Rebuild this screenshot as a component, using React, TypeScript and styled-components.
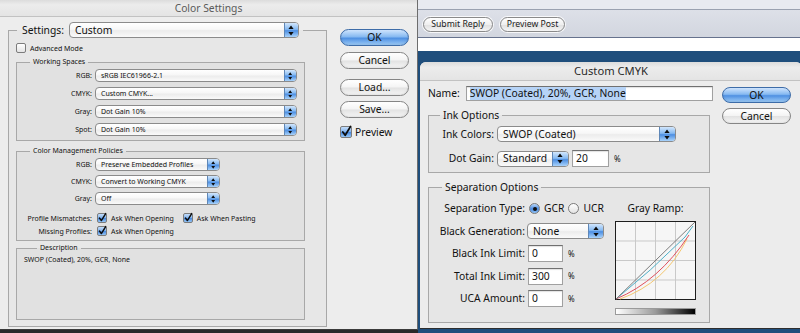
import React from "react"
import styled, { createGlobalStyle, css } from "styled-components"

const FONT = `"Noto Sans", "DejaVu Sans", sans-serif`
const BIG = 10.3
const SMALL = 7
const CMYK_SIZE = 10.3

const GlobalStyle = createGlobalStyle`
  * { box-sizing: border-box; }
  html, body { margin: 0; padding: 0; }
  body {
    width: 800px;
    height: 333px;
    overflow: hidden;
    background: #2a2a2a;
    font-family: ${FONT};
    color: #111;
  }
`

const Screen = styled.div`
  display: flex;
  width: 800px;
  height: 333px;
  overflow: hidden;
`

/* ---------- windows ---------- */

const ColorSettingsWindow = styled.section`
  flex: none;
  width: 418px;
  height: 330px;
  display: flex;
  flex-direction: column;
  background: #ededed;
  border-right: 1px solid #6d6d6d;
  border-bottom: 1px solid #3b3b3b;
`

const WindowTitle = styled.div<{ $h: number; $size: number; $color: string }>`
  flex: none;
  height: ${(p) => p.$h}px;
  display: flex;
  align-items: center;
  justify-content: center;
  font-size: ${(p) => p.$size}px;
  line-height: 1;
  color: ${(p) => p.$color};
  background: linear-gradient(#dcdcdc 0%, #ececec 30%, #e4e4e4 100%);
  border-bottom: 1px solid #c2c2c2;
`

const WindowBody = styled.div<{ $padLeft: number }>`
  display: flex;
  align-items: flex-start;
  padding-left: ${(p) => p.$padLeft}px;
`

const MainColumn = styled.div<{ $w: number }>`
  flex: none;
  width: ${(p) => p.$w}px;
  display: flex;
  flex-direction: column;
`

const ButtonColumn = styled.div<{ $ml: number; $mt: number }>`
  flex: none;
  margin: ${(p) => p.$mt}px 0 0 ${(p) => p.$ml}px;
  display: flex;
  flex-direction: column;
  align-items: flex-start;
`

/* ---------- group boxes ---------- */

const GroupBox = styled.fieldset<{ $mt: number; $pad: string; $w?: number; $h?: number; $gap?: number }>`
  margin: ${(p) => p.$mt}px 0 0 0;
  padding: ${(p) => p.$pad};
  min-width: 0;
  ${(p) => p.$w && `width: ${p.$w}px;`}
  ${(p) => p.$h && `height: ${p.$h}px;`}
  border: 1px solid #a8a8a8;
  background: rgba(0, 0, 0, 0.022);
  display: flex;
  flex-direction: column;
  gap: ${(p) => p.$gap || 0}px;
`

const GroupTitle = styled.legend<{ $ml: number; $size: number; $h: number }>`
  margin-left: ${(p) => p.$ml}px;
  padding: 0 3px;
  height: ${(p) => p.$h}px;
  font-size: ${(p) => p.$size}px;
  line-height: ${(p) => p.$h}px;
  white-space: nowrap;
`

const SettingsLegend = styled.legend`
  margin-left: 1px;
  padding: 0 4px 0 5px;
  height: 16px;
`

const LegendInner = styled.div`
  display: flex;
  align-items: center;
  gap: 5px;
  height: 16px;
`

/* ---------- rows & labels ---------- */

const FieldRow = styled.div<{ $h: number; $mt?: number; $gap?: number; $top?: boolean }>`
  display: flex;
  align-items: ${(p) => (p.$top ? "flex-start" : "center")};
  height: ${(p) => p.$h}px;
  margin-top: ${(p) => p.$mt || 0}px;
  gap: ${(p) => p.$gap || 0}px;
`

const FieldLabel = styled.span<{ $w?: number; $size: number; $mr: number }>`
  flex: none;
  ${(p) => p.$w && `width: ${p.$w}px;`}
  margin-right: ${(p) => p.$mr}px;
  text-align: right;
  font-size: ${(p) => p.$size}px;
  line-height: 1;
  white-space: nowrap;
`

const PlainText = styled.span<{ $size: number; $ml?: number }>`
  margin-left: ${(p) => p.$ml || 0}px;
  font-size: ${(p) => p.$size}px;
  line-height: 1;
  white-space: nowrap;
`

const CheckOption = styled.span<{ $ml?: number }>`
  display: inline-flex;
  align-items: center;
  gap: 4px;
  margin-left: ${(p) => p.$ml || 0}px;
`

/* ---------- aqua controls ---------- */

const Popup = styled.div<{ $w: number; $h: number }>`
  flex: none;
  display: flex;
  width: ${(p) => p.$w}px;
  height: ${(p) => p.$h}px;
  border: 1px solid #8b8b8b;
  border-radius: 4px;
  overflow: hidden;
  background: linear-gradient(#ffffff 0%, #f7f7f7 45%, #ececec 55%, #fafafa 100%);
`

const PopupValue = styled.span<{ $size: number; $indent: number }>`
  flex: 1;
  display: flex;
  align-items: center;
  padding-left: ${(p) => p.$indent}px;
  font-size: ${(p) => p.$size}px;
  line-height: 1;
  white-space: nowrap;
  overflow: hidden;
`

const PopupArrows = styled.span<{ $w: number }>`
  flex: none;
  width: ${(p) => p.$w}px;
  display: flex;
  align-items: center;
  justify-content: center;
  background: linear-gradient(#d2e6fc 0%, #86baf2 45%, #4c8ee2 55%, #a9d3fb 100%);
  border-left: 1px solid #5f87b7;
`

const PushButton = styled.button<{ $w: number; $h: number; $mt: number; $default?: boolean }>`
  flex: none;
  width: ${(p) => p.$w}px;
  height: ${(p) => p.$h}px;
  margin-top: ${(p) => p.$mt}px;
  padding: 0;
  border: 1px solid #858585;
  border-radius: 999px;
  background: linear-gradient(#ffffff 0%, #f4f4f4 48%, #e2e2e2 52%, #f6f6f6 100%);
  font-family: ${FONT};
  font-size: ${BIG}px;
  line-height: 1;
  color: #111;
  box-shadow: inset 0 -1px 2px rgba(0, 0, 0, 0.08);
  ${(p) =>
    p.$default &&
    css`
      border-color: #3d6ca8;
      background: linear-gradient(#cfe4fd 0%, #86b9f1 45%, #4f90e2 55%, #9ccbf8 100%);
    `}
`

const CheckBox = styled.span<{ $size: number; $checked?: boolean }>`
  flex: none;
  display: inline-flex;
  align-items: center;
  justify-content: center;
  width: ${(p) => p.$size}px;
  height: ${(p) => p.$size}px;
  border: 1px solid #7c7c7c;
  border-radius: 2px;
  background: ${(p) =>
    p.$checked
      ? "linear-gradient(#c4ddfa 0%, #7fb2ee 50%, #4a8ae0 55%, #95c6f6 100%)"
      : "linear-gradient(#ffffff, #e4e4e4)"};
`

const RadioButton = styled.span<{ $on?: boolean }>`
  flex: none;
  display: inline-flex;
  align-items: center;
  justify-content: center;
  width: 11px;
  height: 11px;
  border-radius: 50%;
  border: 1px solid #7a7a7a;
  background: ${(p) =>
    p.$on ? "linear-gradient(#b9d7fa, #4b8be0 55%, #8fc2f6)" : "linear-gradient(#ffffff, #e2e2e2)"};
  &::after {
    content: "";
    display: ${(p) => (p.$on ? "block" : "none")};
    width: 4px;
    height: 4px;
    border-radius: 50%;
    background: #101010;
  }
`

const TextField = styled.div<{ $w: number; $h: number; $size: number; $ml?: number }>`
  flex: none;
  display: flex;
  align-items: center;
  width: ${(p) => p.$w}px;
  height: ${(p) => p.$h}px;
  margin-left: ${(p) => p.$ml || 0}px;
  padding-left: 3px;
  background: #ffffff;
  border: 1px solid #a0a0a0;
  border-top-color: #707070;
  box-shadow: inset 0 1px 1px rgba(0, 0, 0, 0.12);
  font-size: ${(p) => p.$size}px;
  line-height: 1;
  white-space: nowrap;
`

const Selection = styled.span`
  background: #b6d3f6;
  padding: 1px 0;
`

/* ---------- forum page behind ---------- */

const RightPane = styled.div`
  flex: 1;
  display: flex;
  flex-direction: column;
  min-width: 0;
`

const ForumTopStrip = styled.div`
  flex: none;
  height: 10px;
  background: #e8eaf0;
  border-bottom: 1px solid #9aa1b0;
`

const ReplyBar = styled.div`
  flex: none;
  height: 28px;
  display: flex;
  align-items: center;
  gap: 7px;
  padding: 2px 0 0 5px;
  background: linear-gradient(#dde0e8, #d2d6df);
  border-bottom: 1px solid #66728d;
`

const ForumButton = styled.button<{ $w: number }>`
  width: ${(p) => p.$w}px;
  height: 15px;
  padding: 0;
  border: 1px solid #8a8a8a;
  border-radius: 8px;
  background: linear-gradient(#ffffff, #efefef 50%, #e0e0e0 52%, #f5f5f5);
  box-shadow: 0 0 0 1px rgba(255, 255, 255, 0.8);
  font-family: ${FONT};
  font-size: 8.7px;
  line-height: 1;
  color: #222;
`

const WhiteStrip = styled.div`
  flex: none;
  height: 13px;
  background: #ffffff;
`

const BlueArea = styled.div`
  flex: 1;
  padding: 11px 0 0 2px;
  background: #1f4e7c;
`

const CmykWindow = styled.section`
  width: 382px;
  height: 267px;
  display: flex;
  flex-direction: column;
  background: #ececec;
  border-radius: 6px 6px 0 0;
  border-bottom: 1px solid #2e2e2e;
  overflow: hidden;
`

/* ---------- gray ramp ---------- */

const RampColumn = styled.div`
  flex: none;
  width: 81px;
  margin-left: auto;
  display: flex;
  flex-direction: column;
  align-items: center;
`

const RampLabel = styled.div`
  height: 17px;
  display: flex;
  align-items: center;
  font-size: ${CMYK_SIZE}px;
  line-height: 1;
  white-space: nowrap;
`

const RampBar = styled.div`
  width: 81px;
  height: 7px;
  margin-top: 8px;
  border: 1px solid #9a9a9a;
  background: linear-gradient(to right, #ffffff, #9a9a9a 50%, #000000);
`

const SepForm = styled.div`
  display: flex;
  flex-direction: column;
  gap: 5.5px;
`

/* ---------- drawings ---------- */

const PopupGlyph = ({ h }: { h: number }) => (
  <svg width={h * 0.55} height={h} viewBox="0 0 6 11">
    <path d="M3 0.5 L5.6 4 H0.4 Z M0.4 7 H5.6 L3 10.5 Z" fill="#0d0d0d" />
  </svg>
)

const CheckMark = ({ size }: { size: number }) => (
  <svg width={size} height={size} viewBox="0 0 10 10" overflow="visible">
    <path
      d="M1.8 5 L4.2 8.2 L9.6 -0.6"
      fill="none"
      stroke="#0c0c0c"
      strokeWidth={1.8}
      strokeLinecap="round"
      strokeLinejoin="round"
    />
  </svg>
)

const GrayRampGraph = () => (
  <svg width={81} height={79} viewBox="0 0 81 79" style={{ marginTop: 4 }}>
    <rect x={0.5} y={0.5} width={80} height={78} fill="#f6f6f6" stroke="#1e1e1e" />
    <path d="M20.5 1 V78 M40.5 1 V78 M60.5 1 V78 M1 20 H80 M1 39.5 H80 M1 59 H80" stroke="#c9c9c9" />
    <path d="M5 78 Q50 62 72 18" fill="none" stroke="#f4c770" strokeWidth={1} />
    <path d="M1 78 Q44 60 74 14" fill="none" stroke="#e0505c" strokeWidth={1} />
    <path d="M1 78 Q36 50 70 16 L78 5" fill="none" stroke="#4fb0c8" strokeWidth={1} />
    <path d="M1 78 L80 1" fill="none" stroke="#7d7d7d" strokeWidth={1} />
  </svg>
)

interface IPopupBox {
  w: number
  h: number
  value: string
  size: number
  cap: number
  indent?: number
}
const PopupBox: React.FC<IPopupBox> = ({ w, h, value, size, cap, indent = 5 }) => (
  <Popup $w={w} $h={h}>
    <PopupValue $size={size} $indent={indent}>
      {value}
    </PopupValue>
    <PopupArrows $w={cap}>
      <PopupGlyph h={h - 5} />
    </PopupArrows>
  </Popup>
)

const Check: React.FC<{ size: number; checked?: boolean }> = ({ size, checked }) => (
  <CheckBox $size={size} $checked={checked}>
    {checked && <CheckMark size={size - 2} />}
  </CheckBox>
)

const App: React.FC = () => {
  return (
    <Screen>
      <GlobalStyle />

      <ColorSettingsWindow>
        <WindowTitle $h={17} $size={BIG} $color="#5a5a5a">
          Color Settings
        </WindowTitle>
        <WindowBody $padLeft={8}>
          <MainColumn $w={319}>
            <GroupBox $mt={5} $pad="5px 21px 6px 7px">
              <SettingsLegend>
                <LegendInner>
                  <PlainText $size={BIG}>Settings:</PlainText>
                  <PopupBox w={230} h={16} value="Custom" size={BIG} cap={14} />
                </LegendInner>
              </SettingsLegend>

              <FieldRow $h={10} $gap={4}>
                <Check size={10} />
                <PlainText $size={SMALL}>Advanced Mode</PlainText>
              </FieldRow>

              <GroupBox $mt={5} $pad="3px 7px 4px 0" $gap={5}>
                <GroupTitle $ml={13} $size={SMALL} $h={8}>
                  Working Spaces
                </GroupTitle>
                <FieldRow $h={13}>
                  <FieldLabel $w={75} $size={SMALL} $mr={3}>RGB:</FieldLabel>
                  <PopupBox w={202} h={13} value="sRGB IEC61966-2.1" size={SMALL} cap={12} />
                </FieldRow>
                <FieldRow $h={13}>
                  <FieldLabel $w={75} $size={SMALL} $mr={3}>CMYK:</FieldLabel>
                  <PopupBox w={202} h={13} value="Custom CMYK..." size={SMALL} cap={12} />
                </FieldRow>
                <FieldRow $h={13}>
                  <FieldLabel $w={75} $size={SMALL} $mr={3}>Gray:</FieldLabel>
                  <PopupBox w={202} h={13} value="Dot Gain 10%" size={SMALL} cap={12} />
                </FieldRow>
                <FieldRow $h={13}>
                  <FieldLabel $w={75} $size={SMALL} $mr={3}>Spot:</FieldLabel>
                  <PopupBox w={202} h={13} value="Dot Gain 10%" size={SMALL} cap={12} />
                </FieldRow>
              </GroupBox>

              <GroupBox $mt={6} $pad="3px 7px 4px 0" $gap={4}>
                <GroupTitle $ml={13} $size={SMALL} $h={8}>
                  Color Management Policies
                </GroupTitle>
                <FieldRow $h={13}>
                  <FieldLabel $w={75} $size={SMALL} $mr={3}>RGB:</FieldLabel>
                  <PopupBox w={125} h={13} value="Preserve Embedded Profiles" size={SMALL} cap={12} />
                </FieldRow>
                <FieldRow $h={13}>
                  <FieldLabel $w={75} $size={SMALL} $mr={3}>CMYK:</FieldLabel>
                  <PopupBox w={125} h={13} value="Convert to Working CMYK" size={SMALL} cap={12} />
                </FieldRow>
                <FieldRow $h={13}>
                  <FieldLabel $w={75} $size={SMALL} $mr={3}>Gray:</FieldLabel>
                  <PopupBox w={125} h={13} value="Off" size={SMALL} cap={12} />
                </FieldRow>
                <FieldRow $h={10} $mt={4}>
                  <FieldLabel $w={75} $size={SMALL} $mr={5}>Profile Mismatches:</FieldLabel>
                  <CheckOption>
                    <Check size={10} checked />
                    <PlainText $size={SMALL}>Ask When Opening</PlainText>
                  </CheckOption>
                  <CheckOption $ml={9}>
                    <Check size={10} checked />
                    <PlainText $size={SMALL}>Ask When Pasting</PlainText>
                  </CheckOption>
                </FieldRow>
                <FieldRow $h={10} $mt={-1}>
                  <FieldLabel $w={75} $size={SMALL} $mr={5}>Missing Profiles:</FieldLabel>
                  <CheckOption>
                    <Check size={10} checked />
                    <PlainText $size={SMALL}>Ask When Opening</PlainText>
                  </CheckOption>
                </FieldRow>
              </GroupBox>

              <GroupBox $mt={3} $pad="3px 7px 0 7px" $h={76}>
                <GroupTitle $ml={13} $size={SMALL} $h={8}>
                  Description
                </GroupTitle>
                <FieldRow $h={8}>
                  <PlainText $size={SMALL}>SWOP (Coated), 20%, GCR, None</PlainText>
                </FieldRow>
              </GroupBox>
            </GroupBox>
          </MainColumn>

          <ButtonColumn $ml={13} $mt={12}>
            <PushButton $w={69} $h={17} $mt={0} $default>OK</PushButton>
            <PushButton $w={69} $h={17} $mt={6}>Cancel</PushButton>
            <PushButton $w={69} $h={17} $mt={10}>Load...</PushButton>
            <PushButton $w={69} $h={17} $mt={5}>Save...</PushButton>
            <FieldRow $h={12} $mt={8} $gap={3}>
              <Check size={12} checked />
              <PlainText $size={BIG}>Preview</PlainText>
            </FieldRow>
          </ButtonColumn>
        </WindowBody>
      </ColorSettingsWindow>

      <RightPane>
        <ForumTopStrip />
        <ReplyBar>
          <ForumButton $w={70}>Submit Reply</ForumButton>
          <ForumButton $w={65}>Preview Post</ForumButton>
        </ReplyBar>
        <WhiteStrip />
        <BlueArea>
          <CmykWindow>
            <WindowTitle $h={19} $size={11.2} $color="#2a2a2a">
              Custom CMYK
            </WindowTitle>
            <WindowBody $padLeft={8}>
              <MainColumn $w={282}>
                <FieldRow $h={15} $mt={5}>
                  <FieldLabel $size={CMYK_SIZE} $mr={6}>Name:</FieldLabel>
                  <TextField $w={247} $h={15} $size={CMYK_SIZE}>
                    <Selection>SWOP (Coated), 20%, GCR, None</Selection>
                  </TextField>
                </FieldRow>

                <GroupBox $mt={8} $pad="5px 0 5px 0" $gap={8}>
                  <GroupTitle $ml={11} $size={CMYK_SIZE} $h={12}>
                    Ink Options
                  </GroupTitle>
                  <FieldRow $h={16}>
                    <FieldLabel $w={65} $size={CMYK_SIZE} $mr={3}>Ink Colors:</FieldLabel>
                    <PopupBox w={179} h={16} value="SWOP (Coated)" size={CMYK_SIZE} cap={16} />
                  </FieldRow>
                  <FieldRow $h={17}>
                    <FieldLabel $w={65} $size={CMYK_SIZE} $mr={3}>Dot Gain:</FieldLabel>
                    <PopupBox w={72} h={16} value="Standard" size={CMYK_SIZE} cap={16} />
                    <TextField $w={37} $h={17} $size={CMYK_SIZE} $ml={3}>
                      20
                    </TextField>
                    <PlainText $size={8} $ml={5}>%</PlainText>
                  </FieldRow>
                </GroupBox>

                <GroupBox $mt={8} $pad="7px 13px 0 0" $h={142}>
                  <GroupTitle $ml={13} $size={CMYK_SIZE} $h={12}>
                    Separation Options
                  </GroupTitle>
                  <FieldRow $h={122} $top>
                    <SepForm>
                      <FieldRow $h={17}>
                        <FieldLabel $w={96} $size={CMYK_SIZE} $mr={4}>Separation Type:</FieldLabel>
                        <CheckOption>
                          <RadioButton $on />
                          <PlainText $size={CMYK_SIZE}>GCR</PlainText>
                        </CheckOption>
                        <CheckOption $ml={4}>
                          <RadioButton />
                          <PlainText $size={CMYK_SIZE}>UCR</PlainText>
                        </CheckOption>
                      </FieldRow>
                      <FieldRow $h={17}>
                        <FieldLabel $w={96} $size={CMYK_SIZE} $mr={2}>Black Generation:</FieldLabel>
                        <PopupBox w={77} h={16} value="None" size={CMYK_SIZE} cap={15} />
                      </FieldRow>
                      <FieldRow $h={17}>
                        <FieldLabel $w={96} $size={CMYK_SIZE} $mr={3}>Black Ink Limit:</FieldLabel>
                        <TextField $w={35} $h={17} $size={CMYK_SIZE}>0</TextField>
                        <PlainText $size={8} $ml={5}>%</PlainText>
                      </FieldRow>
                      <FieldRow $h={17}>
                        <FieldLabel $w={96} $size={CMYK_SIZE} $mr={3}>Total Ink Limit:</FieldLabel>
                        <TextField $w={35} $h={17} $size={CMYK_SIZE}>300</TextField>
                        <PlainText $size={8} $ml={5}>%</PlainText>
                      </FieldRow>
                      <FieldRow $h={17}>
                        <FieldLabel $w={96} $size={CMYK_SIZE} $mr={3}>UCA Amount:</FieldLabel>
                        <TextField $w={35} $h={17} $size={CMYK_SIZE}>0</TextField>
                        <PlainText $size={8} $ml={5}>%</PlainText>
                      </FieldRow>
                    </SepForm>
                    <RampColumn>
                      <RampLabel>Gray Ramp:</RampLabel>
                      <GrayRampGraph />
                      <RampBar />
                    </RampColumn>
                  </FieldRow>
                </GroupBox>
              </MainColumn>

              <ButtonColumn $ml={12} $mt={6}>
                <PushButton $w={69} $h={16} $mt={0} $default>OK</PushButton>
                <PushButton $w={69} $h={16} $mt={5}>Cancel</PushButton>
              </ButtonColumn>
            </WindowBody>
          </CmykWindow>
        </BlueArea>
      </RightPane>
    </Screen>
  )
}

export default App
